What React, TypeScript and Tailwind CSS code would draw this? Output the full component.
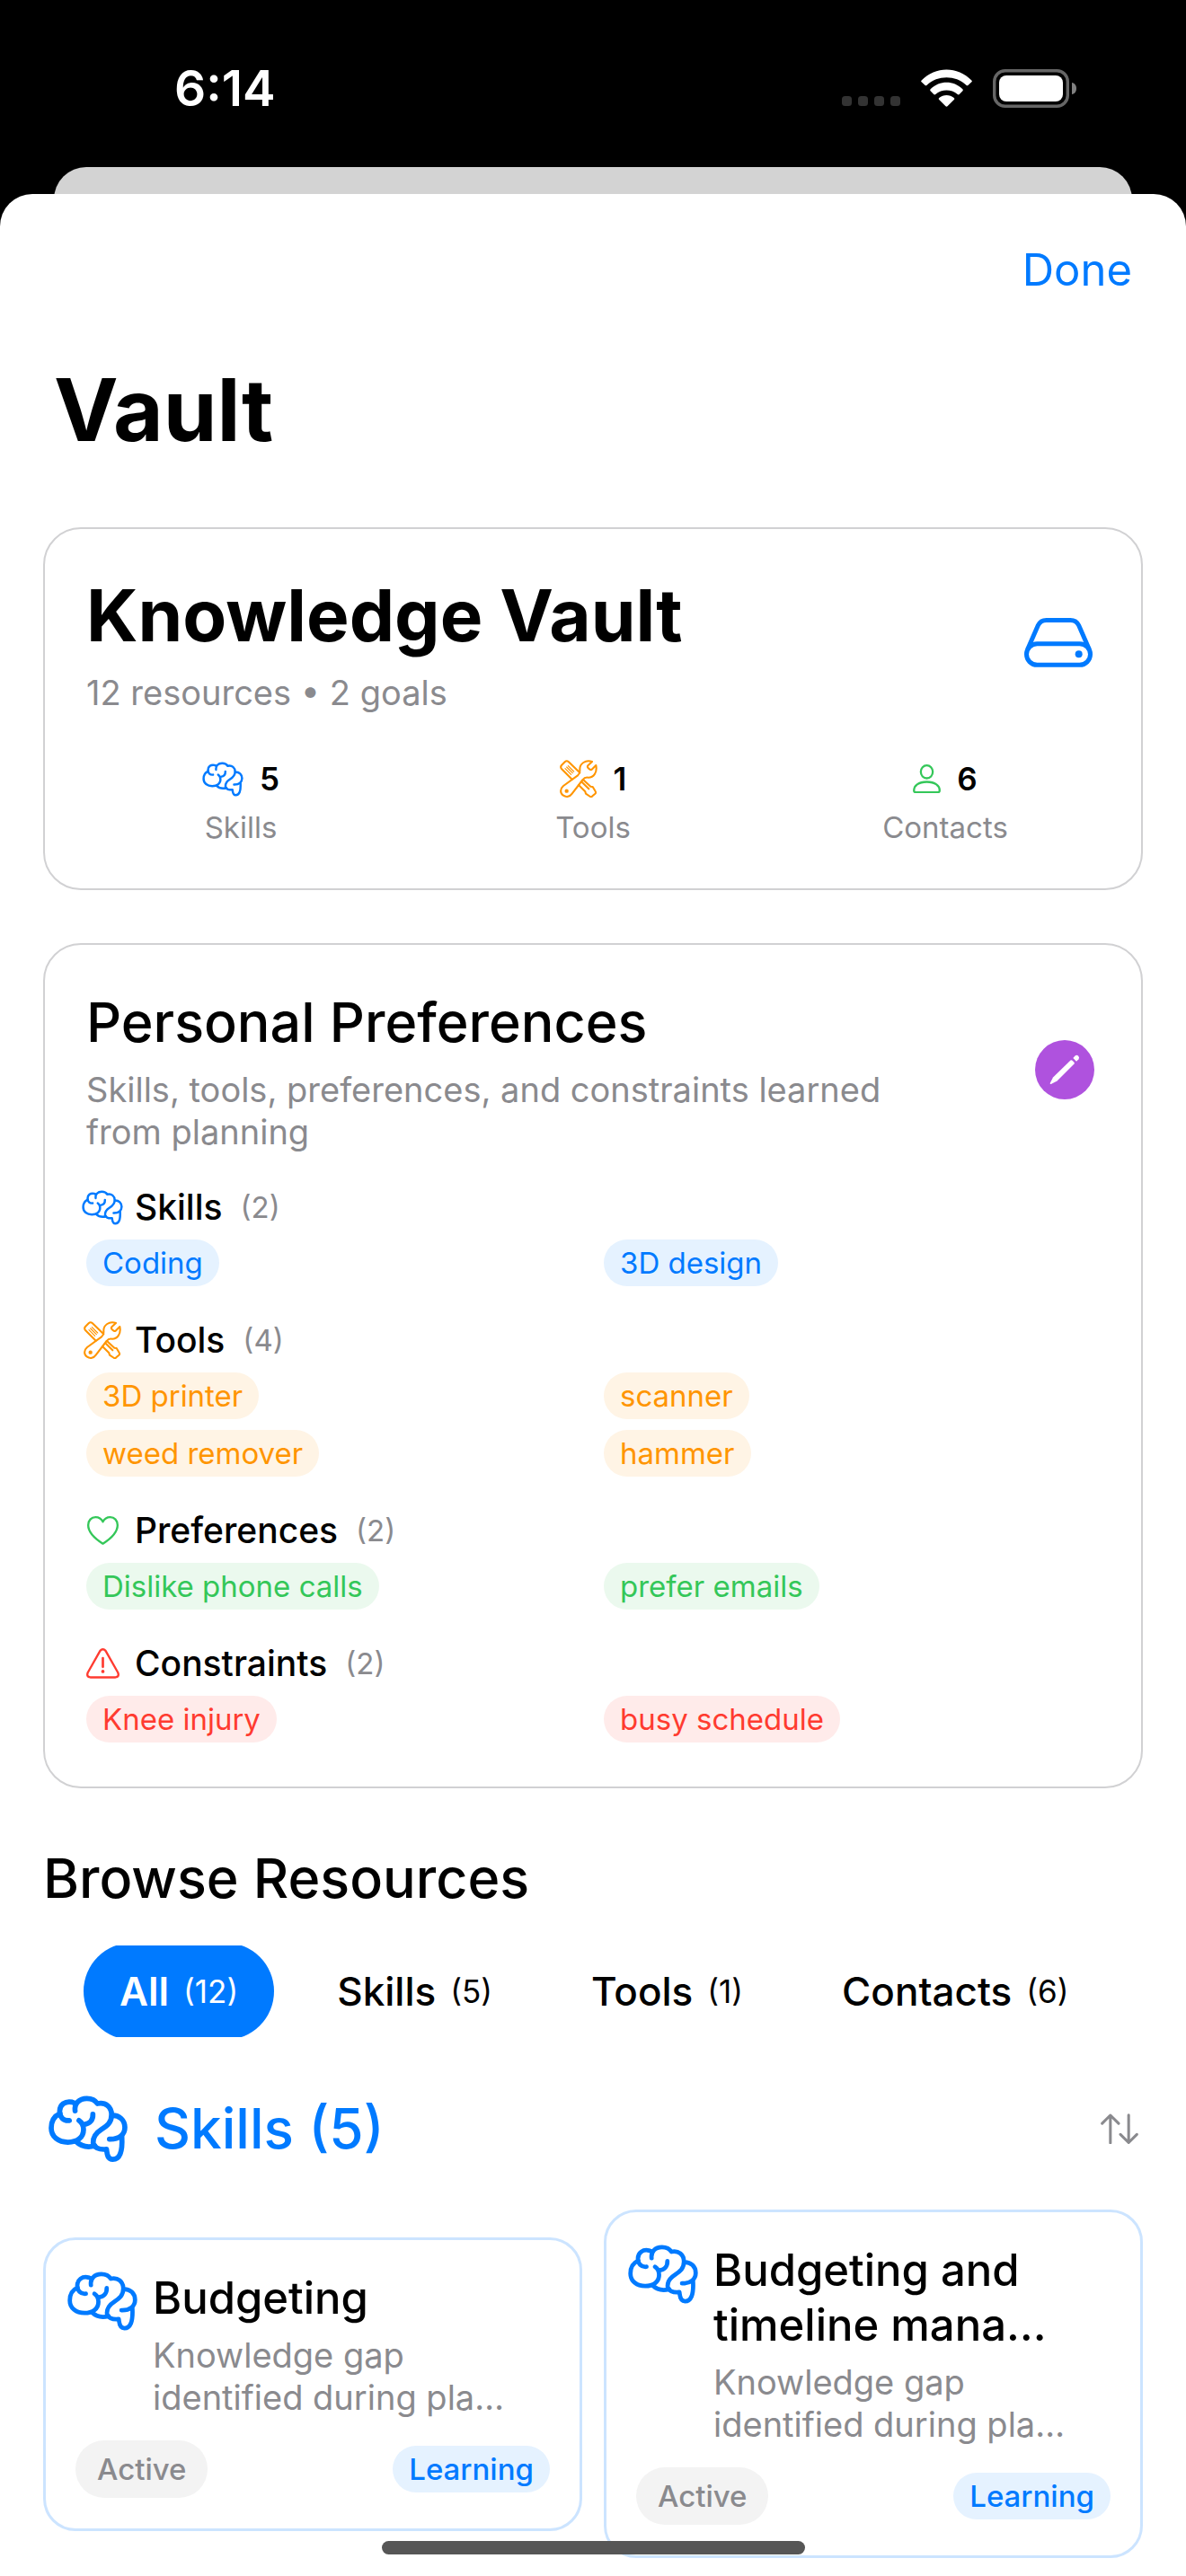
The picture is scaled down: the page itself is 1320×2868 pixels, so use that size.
import { useState } from 'react';
import type { ReactNode } from 'react';
import clsx from 'clsx';

interface IconProps {
  className?: string;
  strokeWidth?: number;
}

const BrainIcon = ({ className, strokeWidth = 17 }: IconProps) => (
  <svg
    viewBox="41 71 262 222"
    className={clsx('shrink-0 overflow-visible', className)}
    fill="none"
    stroke="currentColor"
    strokeWidth={strokeWidth}
    strokeLinecap="round"
    strokeLinejoin="round"
    aria-hidden="true"
  >
    <path d="M79 131C61 139 50 156 50 179C50 208 74 226 105 226C136 226 157 210 157 184C157 170 151 160 142 154" />
    <path d="M188 133C189 152 178 165 159 167" />
    <path d="M110 154C90 156 78 143 78 123C78 102 96 88 119 93L132 98" />
    <path d="M129 122C126 98 142 81 168 81C184 81 196 87 203 98C230 92 250 109 250 135C250 160 236 171 216 184C197 196 188 208 189 228C190 243 208 252 233 249C235 260 234 283 254 283C276 283 287 260 284 208" />
    <path d="M251 137C276 136 294 153 294 177C294 201 275 217 243 216" />
    <path d="M133 224C150 241 175 243 195 238" />
  </svg>
);

const ToolsIcon = ({ className }: IconProps) => (
  <svg
    viewBox="0 0 126 126"
    className={clsx('shrink-0', className)}
    fill="none"
    stroke="currentColor"
    strokeWidth="6.2"
    strokeLinecap="round"
    strokeLinejoin="round"
    aria-hidden="true"
  >
    <path d="M41 65L6 30Q1 24 6 18L17 7Q23 1 29 6L67 43" />
    <path d="M18 29L38 49M23 24L43 44M28 20L47 39" strokeWidth="3.5" />
    <path d="M108 6C86 -2 66 13 67 33C68 42 66 47 60 52L12 87C0 97 1 112 12 119C22 126 34 123 41 113L77 66C82 59 88 58 95 59C113 59 126 42 121 18L107 32Q103 35 98 30L94 26Q91 22 95 18Z" />
    <circle cx="23" cy="104" r="6.5" fill="currentColor" stroke="none" />
    <path d="M63 84L85 106L87 113L102 123Q106 125 109 121L118 113Q122 109 119 105L110 90L103 89L78 66M74 74L97 97" />
  </svg>
);

const PersonIcon = ({ className }: IconProps) => (
  <svg
    viewBox="0 0 93 97"
    className={clsx('shrink-0', className)}
    fill="none"
    stroke="currentColor"
    strokeWidth="6.8"
    aria-hidden="true"
  >
    <ellipse cx="46.5" cy="25" rx="20" ry="21.5" />
    <path d="M3.5 87C3.5 72 18 58.500 46.5 58.500C75 58.500 89.5 72 89.5 87Q89.5 93.500 83 93.500H10Q3.5 93.500 3.5 87Z" />
  </svg>
);

const DriveIcon = ({ className }: IconProps) => (
  <svg
    viewBox="0 0 228 165"
    className={clsx('shrink-0', className)}
    fill="none"
    stroke="currentColor"
    strokeWidth="15"
    aria-hidden="true"
  >
    <rect x="7.5" y="86" width="213" height="71" rx="35.5" />
    <path d="M11 105L46 25Q54 7.5 74 7.5H154Q174 7.5 182 25L217 105" />
    <circle cx="182" cy="121" r="12" fill="currentColor" stroke="none" />
  </svg>
);

const HeartIcon = ({ className }: IconProps) => (
  <svg
    viewBox="0 0 105 96"
    className={clsx('shrink-0', className)}
    fill="none"
    stroke="currentColor"
    strokeWidth="7"
    strokeLinejoin="round"
    aria-hidden="true"
  >
    <path d="M52.5 92C24 74 3.5 53 3.5 30C3.5 14 14 3.5 28 3.5C40 3.5 48 10 52.5 19C57 10 65 3.5 77 3.5C91 3.5 101.5 14 101.5 30C101.5 53 81 74 52.5 92Z" />
  </svg>
);

const WarningIcon = ({ className }: IconProps) => (
  <svg
    viewBox="0 0 110 100"
    className={clsx('shrink-0', className)}
    fill="none"
    stroke="currentColor"
    strokeWidth="7"
    strokeLinecap="round"
    strokeLinejoin="round"
    aria-hidden="true"
  >
    <path d="M46 8.5Q55 -1 64 8.5L105 81Q110 95 97 96.500H13Q0 95 5 81Z" />
    <path d="M55 33V62" strokeWidth="8" />
    <circle cx="55" cy="77" r="5.5" fill="currentColor" stroke="none" />
  </svg>
);

const PencilIcon = ({ className }: IconProps) => (
  <svg viewBox="0 0 66 66" className={className} fill="currentColor" aria-hidden="true">
    <path d="M39.500 22.5Q40.500 21.8 41.5 22.8L43.5 24.8Q44.2 25.7 43.5 26.6L24.5 45.5L17.8 49Q16.3 49.3 16.8 47.8L20 41.5Z" />
    <path d="M42.3 20L44.8 17.3Q46.5 16 48.2 17.7Q49.8 19.5 48.5 21.2L46 23.7Z" />
  </svg>
);

const SortIcon = ({ className }: IconProps) => (
  <svg
    viewBox="0 0 124 102"
    className={className}
    fill="none"
    stroke="currentColor"
    strokeWidth="9"
    strokeLinecap="round"
    strokeLinejoin="round"
    aria-hidden="true"
  >
    <path d="M32 97V6M5 33L32 6L59 33M92 5V96M65 69L92 96L119 69" />
  </svg>
);

const StatusBar = () => (
  <div className="flex h-[186px] items-start justify-between bg-black pt-[66px] pr-[122px] pl-[194px] text-white">
    <span className="text-[55px] leading-[64px] font-semibold">6:14</span>
    <div className="flex h-[64px] items-center">
      <svg viewBox="0 0 66 42" className="mr-[22px] h-[42px] w-[66px] fill-[#333333]" aria-hidden="true">
        <rect x="0" y="30" width="11" height="11" rx="3.5" />
        <rect x="18" y="30" width="11" height="11" rx="3.5" />
        <rect x="36" y="30" width="11" height="11" rx="3.5" />
        <rect x="54" y="30" width="11" height="11" rx="3.5" />
      </svg>
      <svg viewBox="0 0 172 126" className="mr-[23px] h-[42px] w-[57px] fill-white" aria-hidden="true">
        <path d="M2 37Q-1 40 2 43L14 54Q17 56 20 53C56 19 116 19 152 53Q155 56 158 54L170 43Q173 40 170 37C123 -11 49 -11 2 37Z" />
        <path d="M32 67Q29 70 32 73L43 84Q46 87 49 84C70 66 102 66 123 84Q126 87 129 84L140 73Q143 70 140 67C109 37 63 37 32 67Z" />
        <path d="M61 96Q58 99 61 102L83 124Q86 127 89 124L111 102Q114 99 111 96C97 84 75 84 61 96Z" />
      </svg>
      <svg viewBox="0 0 93 43" className="h-[43px] w-[93px]" aria-hidden="true">
        <rect x="1.7" y="1.7" width="81.6" height="39.6" rx="12" fill="none" stroke="#666666" strokeWidth="3.4" />
        <rect x="7" y="7" width="71" height="29" rx="8" fill="#ffffff" />
        <path d="M88 15C91 15.500 93 18 93 21.5C93 25 91 27.5 88 28Z" fill="#808080" />
      </svg>
    </div>
  </div>
);

interface StatProps {
  icon: ReactNode;
  value: number;
  label: string;
}

const Stat = ({ icon, value, label }: StatProps) => (
  <div className="flex flex-col items-center gap-2">
    <div className="flex h-12 items-center gap-[18px]">
      {icon}
      <span className="text-[35px] leading-[48px] font-semibold">{value}</span>
    </div>
    <p className="text-[33px] leading-[44px] text-[#8a8a8e]">{label}</p>
  </div>
);

interface PreferenceGroup {
  name: string;
  icon: ReactNode;
  color: string;
  chip: string;
  items: string[];
}

const preferenceGroups: PreferenceGroup[] = [
  {
    name: 'Skills',
    icon: <BrainIcon className="w-[46px]" strokeWidth={14} />,
    color: 'text-[#007aff]',
    chip: 'bg-[#e5f2ff] text-[#007aff]',
    items: ['Coding', '3D design'],
  },
  {
    name: 'Tools',
    icon: <ToolsIcon className="w-[42px]" />,
    color: 'text-[#ff9500]',
    chip: 'bg-[#fff4e5] text-[#ff9500]',
    items: ['3D printer', 'scanner', 'weed remover', 'hammer'],
  },
  {
    name: 'Preferences',
    icon: <HeartIcon className="w-[35px]" />,
    color: 'text-[#34c759]',
    chip: 'bg-[#ebf9ee] text-[#34c759]',
    items: ['Dislike phone calls', 'prefer emails'],
  },
  {
    name: 'Constraints',
    icon: <WarningIcon className="w-[37px]" />,
    color: 'text-[#ff3b30]',
    chip: 'bg-[#ffebea] text-[#ff3b30]',
    items: ['Knee injury', 'busy schedule'],
  },
];

const PreferenceSection = ({ group }: { group: PreferenceGroup }) => (
  <section>
    <h3 className="flex items-center text-[39px] leading-[48px] font-medium">
      <span className={clsx('mr-[18px] flex w-9 justify-center', group.color)}>{group.icon}</span>
      {group.name}
      <span className="ml-5 text-[33px] font-normal text-[#8a8a8e]">({group.items.length})</span>
    </h3>
    <ul className="mt-3 grid grid-cols-2 gap-x-6 gap-y-3">
      {group.items.map((item) => (
        <li key={item} className="flex">
          <span className={clsx('rounded-full px-[18px] text-[33px] leading-[52px]', group.chip)}>{item}</span>
        </li>
      ))}
    </ul>
  </section>
);

const tabs = [
  { name: 'All', count: 12 },
  { name: 'Skills', count: 5 },
  { name: 'Tools', count: 1 },
  { name: 'Contacts', count: 6 },
];

const resources = [
  { title: ['Budgeting'], description: ['Knowledge gap', 'identified during pla…'] },
  { title: ['Budgeting and', 'timeline mana…'], description: ['Knowledge gap', 'identified during pla…'] },
];

const ResourceCard = ({ title, description }: { title: string[]; description: string[] }) => (
  <article className="rounded-[36px] border-3 border-[#cce4ff] bg-white px-[33px] pt-[34px] pb-[34px]">
    <div className="flex items-start gap-[26px]">
      <span className="flex h-[70px] w-[60px] shrink-0 items-center justify-center text-[#007aff]">
        <BrainIcon className="w-[78px]" strokeWidth={16} />
      </span>
      <div className="min-w-0">
        <h4 className="text-[49px] leading-[61px] font-medium">
          {title.map((line) => (
            <span key={line} className="block whitespace-nowrap">{line}</span>
          ))}
        </h4>
        <p className="mt-[10px] text-[38px] leading-[47px] text-[#8a8a8e]">
          {description.map((line) => (
            <span key={line} className="block whitespace-nowrap">{line}</span>
          ))}
        </p>
      </div>
    </div>
    <div className="mt-6 flex items-center justify-between">
      <span className="rounded-full bg-[#f3f3f3] px-6 text-[33px] leading-[64px] font-medium text-[#8a8a8e]">
        Active
      </span>
      <span className="rounded-full bg-[#e5f2ff] px-[18px] text-[33px] leading-[52px] font-medium text-[#007aff]">
        Learning
      </span>
    </div>
  </article>
);

const App = () => {
  const [activeTab, setActiveTab] = useState('All');

  return (
    <div className="min-h-screen bg-white font-[Inter,'Liberation_Sans',sans-serif] text-black">
      <div className="bg-black">
        <StatusBar />
        <div className="mx-[60px] -mb-[30px] h-[60px] rounded-t-[36px] bg-[#d3d3d3]" />
        <div className="relative h-[60px] rounded-t-[36px] bg-white" />
      </div>

      <main className="px-12 pb-4">
        <div className="-mt-[60px] flex h-[170px] items-center justify-end pr-3">
          <button type="button" className="relative text-[49px] leading-[64px] text-[#007aff]">Done</button>
        </div>
        <h1 className="pl-3 text-[96px] leading-[140px] font-bold">Vault</h1>

        <section className="mt-[61px] rounded-[42px] border-2 border-[#d1d1d3] px-[46px] py-[46px]">
          <div className="flex items-center justify-between">
            <div>
              <h2 className="text-[80px] leading-[100px] font-bold">Knowledge Vault</h2>
              <p className="mt-3 text-[38px] leading-[48px] text-[#8a8a8e]">12 resources • 2 goals</p>
            </div>
            <DriveIcon className="mr-2 w-[76px] text-[#007aff]" />
          </div>
          <div className="mt-12 grid grid-cols-3 gap-12">
            <Stat
              icon={<BrainIcon className="w-[46px] text-[#007aff]" strokeWidth={14} />}
              value={5}
              label="Skills"
            />
            <Stat icon={<ToolsIcon className="w-[42px] text-[#ff9500]" />} value={1} label="Tools" />
            <Stat icon={<PersonIcon className="w-[31px] text-[#34c759]" />} value={6} label="Contacts" />
          </div>
        </section>

        <section className="mt-[59px] rounded-[42px] border-2 border-[#d1d1d3] px-[46px] pt-[46px] pb-[49px]">
          <div className="flex items-center justify-between gap-6">
            <div>
              <h2 className="text-[61px] leading-[80px] font-medium">Personal Preferences</h2>
              <p className="mt-3 max-w-[940px] text-[38px] leading-[47px] text-[#8a8a8e]">
                Skills, tools, preferences, and constraints learned from planning
              </p>
            </div>
            <button
              type="button"
              aria-label="Edit preferences"
              className="mr-[6px] size-[66px] shrink-0 rounded-full bg-[#af52de] text-white"
            >
              <PencilIcon className="size-full" />
            </button>
          </div>
          <div className="mt-9 flex flex-col gap-9">
            {preferenceGroups.map((group) => (
              <PreferenceSection key={group.name} group={group} />
            ))}
          </div>
        </section>

        <h2 className="mt-[60px] text-[61px] leading-[80px] font-medium">Browse Resources</h2>

        <div className="mt-[35px] flex h-[102px] items-center gap-[30px] overflow-hidden pl-[45px]">
          {tabs.map((tab) => (
            <button
              key={tab.name}
              type="button"
              onClick={() => setActiveTab(tab.name)}
              className={clsx(
                'flex h-[108px] shrink-0 items-center gap-4 rounded-full px-10 text-[44px] leading-[54px]',
                activeTab === tab.name ? 'bg-[#007aff] font-semibold text-white' : 'font-medium',
              )}
            >
              {tab.name}
              <span className="text-[35px] font-normal">({tab.count})</span>
            </button>
          ))}
        </div>

        <div className="mt-[62px] flex h-20 items-center justify-between pr-[5px] pl-[6px]">
          <h3 className="flex items-center gap-[30px] text-[62px] leading-[80px] font-medium text-[#007aff]">
            <BrainIcon className="w-[88px]" />
            Skills (5)
          </h3>
          <button type="button" aria-label="Sort skills" className="text-[#8a8a8e]">
            <SortIcon className="w-[42px]" />
          </button>
        </div>

        <div className="mt-[50px] grid grid-cols-2 items-center gap-6">
          {resources.map((resource) => (
            <ResourceCard key={resource.title[0]} {...resource} />
          ))}
        </div>
      </main>

      <div className="fixed inset-x-0 bottom-6 mx-auto h-[15px] w-[471px] rounded-full bg-[#565656]" />
    </div>
  );
};

export default App;
